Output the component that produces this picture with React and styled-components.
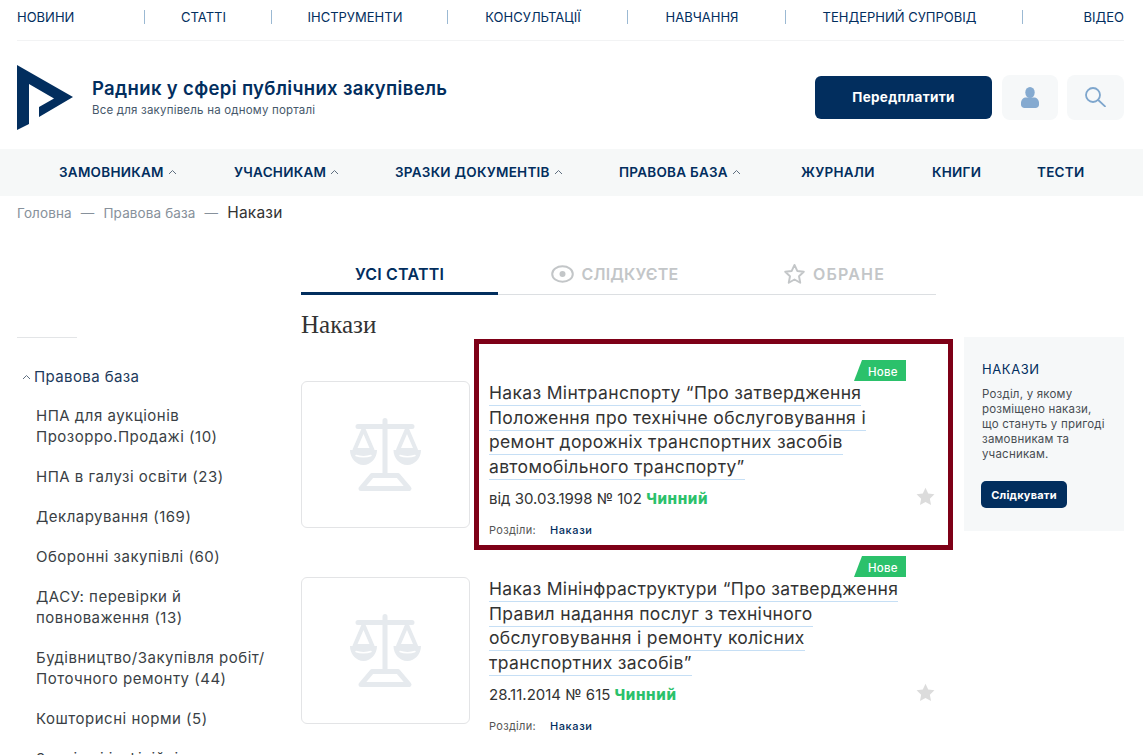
import React from "react";
import styled, {createGlobalStyle} from "styled-components";

const NAVY = "#022e5e";
const FONT = `"Inter", "Noto Sans", "Liberation Sans", sans-serif`;

const GlobalStyle = createGlobalStyle`
  html, body {
    margin: 0;
    height: 755px;
    overflow: hidden;
    background: #fff;
    font-family: ${FONT};
    color: #333;
  }
  * { box-sizing: border-box; }
`;

const Page = styled.div`
  width: 1143px;
`;

const TopNav = styled.nav`
  display: grid;
  grid-template-columns: 128px 127px 176px 180px 158px 237px 1fr;
  align-items: center;
  height: 41px;
  margin: 0 19px 0 17px;
  padding-bottom: 6px;
  border-bottom: 1px solid #f2f3f4;
`;

const TopItem = styled.a`
  display: flex;
  justify-content: ${(p) => p.$align || "center"};
  padding-right: ${(p) => (p.$align ? 0 : 9)}px;
  height: 14px;
  align-items: center;
  font-size: 13px;
  color: ${NAVY};
  white-space: nowrap;
  border-right: ${(p) => (p.$last ? "none" : "1px solid #9bb9d3")};
`;

const Header = styled.header`
  display: flex;
  align-items: center;
  height: 108px;
  padding-top: 4px;
  margin: 0 19px 0 17px;
`;

const Brand = styled.div`
  flex: 1;
  display: flex;
  align-items: center;
  gap: 19px;
`;

const BrandTitle = styled.div`
  font-size: 18.5px;
  font-weight: 600;
  letter-spacing: 0.35px;
  color: ${NAVY};
  line-height: 22px;
`;

const BrandSub = styled.div`
  font-size: 11.5px;
  letter-spacing: 0.2px;
  color: #46586b;
  margin-top: 4px;
`;

const Subscribe = styled.button`
  width: 177px;
  height: 43px;
  border: none;
  border-radius: 6px;
  background: ${NAVY};
  color: #fff;
  font-family: ${FONT};
  font-size: 13.5px;
  font-weight: 700;
  letter-spacing: 0.3px;
  margin-right: 10px;
`;

const IconButton = styled.button`
  width: ${(p) => p.$w}px;
  height: 45px;
  border: none;
  border-radius: 8px;
  background: #f6f8f9;
  margin-right: ${(p) => p.$mr || 0}px;
  display: flex;
  align-items: center;
  justify-content: center;
  padding: 0;
`;

const MainNav = styled.nav`
  display: flex;
  align-items: center;
  height: 47px;
  padding: 0 0 1px 59px;
  background: #f6f8f8;
`;

const MainItem = styled.a`
  display: flex;
  align-items: center;
  gap: 4px;
  width: ${(p) => p.$w}px;
  font-size: 13.5px;
  font-weight: 600;
  letter-spacing: 0.25px;
  color: ${NAVY};
  white-space: nowrap;
`;

const Crumbs = styled.div`
  display: flex;
  align-items: center;
  gap: 9px;
  height: 33px;
  padding-left: 17px;
  font-size: 13.5px;
  letter-spacing: 0.13px;
  color: #87919b;
`;

const CrumbNow = styled.span`
  font-size: 15.5px;
  letter-spacing: 0.2px;
  color: #333;
`;

const Main = styled.main`
  display: grid;
  grid-template-columns: 284px 635px 160px;
  margin-left: 17px;
  padding-top: 21px;
`;

const Sidebar = styled.aside`
  padding-top: 87px;
`;

const SideRule = styled.div`
  width: 60px;
  height: 1px;
  background: #e3e5e7;
  margin-bottom: 28px;
`;

const SideHead = styled.div`
  display: flex;
  align-items: center;
  gap: 3px;
  padding-left: 5px;
  font-size: 15px;
  letter-spacing: 0.4px;
  line-height: 21px;
  color: #1d3a5c;
  margin-bottom: 18px;
`;

const SideList = styled.ul`
  list-style: none;
  margin: 0;
  padding: 0 0 0 19px;
  display: flex;
  flex-direction: column;
  gap: 19px;
`;

const SideItem = styled.li`
  font-size: 15px;
  letter-spacing: 0.5px;
  line-height: 21px;
  color: #3a3f45;
  white-space: nowrap;
`;

const Center = styled.section`
  min-width: 0;
`;

const Tabs = styled.div`
  display: grid;
  grid-template-columns: 197px 234px 1fr;
  height: 45px;
  border-bottom: 1px solid #dcdfe2;
`;

const Tab = styled.div`
  display: flex;
  align-items: center;
  justify-content: center;
  gap: 7px;
  height: 45px;
  padding: 6px 0 ${(p) => (p.$active ? 0 : 4)}px;
  font-size: 16px;
  letter-spacing: ${(p) => p.$spacing || 0.2}px;
  font-weight: 600;
  color: ${(p) => (p.$active ? NAVY : "#c3c6c8")};
  border-bottom: ${(p) => (p.$active ? `3px solid ${NAVY}` : "none")};
`;

const Heading = styled.h1`
  margin: 15px 0 0;
  height: 30px;
  font-family: "Liberation Serif", serif;
  font-size: 25px;
  line-height: 30px;
  font-weight: 400;
  color: #333;
`;

const Row = styled.article`
  position: relative;
  display: flex;
  gap: 19px;
  height: 196px;
  &:first-of-type {
    margin-top: 20px;
  }
`;

const Thumb = styled.div`
  flex: none;
  width: 169px;
  height: 147px;
  margin-top: 21px;
  border: 1px solid #e3e4e6;
  border-radius: 6px;
  display: flex;
  align-items: center;
  justify-content: center;
`;

const Body = styled.div`
  position: relative;
  flex: 1;
  min-width: 0;
`;

const BadgeLine = styled.div`
  display: flex;
  justify-content: flex-end;
  padding-right: 30px;
`;

const Badge = styled.span`
  width: 52px;
  height: 21px;
  padding: 3px 0 0 14px;
  background: #2bc16b;
  clip-path: polygon(8px 0, 100% 0, 100% 100%, 0 100%);
  color: #fff;
  font-size: 11.5px;
  font-weight: 500;
  letter-spacing: 0.2px;
  line-height: 18px;
`;

const Title = styled.h2`
  margin: 0;
  font-size: 17.5px;
  line-height: 24.5px;
  font-weight: 400;
  letter-spacing: 0.33px;
  color: #333;
  height: 98px;
  max-width: 430px;
`;

const TitleText = styled.span`
  border-bottom: 1px solid #c6dff5;
  padding-bottom: 2px;
`;

const Meta = styled.div`
  margin-top: 10px;
  font-size: 15px;
  line-height: 20px;
  color: #333;
`;

const Status = styled.b`
  color: #2bc16b;
  font-weight: 800;
  letter-spacing: 0.6px;
`;

const Sections = styled.div`
  display: flex;
  gap: 14px;
  margin-top: 14px;
  font-size: 11px;
  letter-spacing: 0.3px;
  line-height: 14px;
  color: #555;
`;

const SectionLink = styled.a`
  color: ${NAVY};
  font-weight: 500;
  letter-spacing: 0.6px;
`;

const Fav = styled.div`
  position: absolute;
  right: 1px;
  top: 127px;
  line-height: 0;
`;

const RedFrame = styled.div`
  position: absolute;
  left: 173px;
  top: -21px;
  width: 479px;
  height: 211px;
  border: 5px solid #7e0017;
  pointer-events: none;
`;

const Panel = styled.aside`
  margin: 87px 0 0 28px;
  width: 160px;
  height: 194px;
  padding: 24px 18px 0;
  background: #f6f8f9;
`;

const PanelTitle = styled.div`
  font-size: 13px;
  font-weight: 400;
  letter-spacing: 0.6px;
  color: ${NAVY};
  line-height: 16px;
`;

const PanelText = styled.p`
  margin: 10px 0 0;
  font-size: 11.5px;
  letter-spacing: 0.2px;
  line-height: 15px;
  color: #484d52;
`;

const Follow = styled.button`
  display: block;
  margin: 19px 0 0 -1px;
  width: 86px;
  height: 27px;
  border: none;
  border-radius: 5px;
  background: ${NAVY};
  color: #fff;
  font-family: ${FONT};
  font-size: 11px;
  font-weight: 700;
  letter-spacing: 0.2px;
  padding: 0;
`;

const Chevron = () => (
  <svg width="9" height="6" viewBox="0 0 9 6" fill="none" stroke="#5f6f80" strokeWidth="1">
    <path d="M1 5l3.5-3.5L8 5" />
  </svg>
);

const Logo = () => (
  <svg width="56" height="65" viewBox="0 0 56 65" fill={NAVY}>
    <path d="M0 0L56 32 22 52V42L37 33.5 12 19V59L0 65Z" />
  </svg>
);

const UserIcon = () => (
  <svg width="18" height="21" viewBox="0 0 18 21" fill="#85aad0">
    <ellipse cx="9" cy="5.500" rx="4.700" ry="5.500" />
    <path d="M0 16c0-3.500 2.500-5.500 5-5.500h8c2.500 0 5 2 5 5.500v1.500c0 2-1.500 3.500-3.500 3.500h-11C1.500 21 0 19.500 0 17.500z" />
  </svg>
);

const SearchIcon = () => (
  <svg width="21" height="20" viewBox="0 0 21 20" fill="none" stroke="#7ea6cd" strokeWidth="1.800">
    <circle cx="8" cy="8" r="7" />
    <path d="M13.200 13l6.800 6.300" strokeLinecap="round" />
  </svg>
);

const EyeIcon = () => (
  <svg width="23" height="18" viewBox="0 0 23 18" fill="none" stroke="#c3c6c8" strokeWidth="2">
    <ellipse cx="11.500" cy="9" rx="10.300" ry="7.800" />
    <circle cx="11.500" cy="9" r="3" fill="#c3c6c8" stroke="none" />
  </svg>
);

const StarOutline = () => (
  <svg width="23" height="24" viewBox="0 0 24 24" fill="none" stroke="#c3c6c8" strokeWidth="2" strokeLinejoin="round">
    <path d="M12 2.500l2.900 6.300 6.800.8-5 4.700 1.300 6.800-6-3.400-6 3.400 1.300-6.800-5-4.700 6.800-.8z" />
  </svg>
);

const StarSolid = () => (
  <svg width="19" height="19" viewBox="0 0 24 24" fill="#dcdcdc">
    <path d="M12 1l3.400 7.300 7.900 1-5.800 5.500 1.500 7.900-7-3.900-7 3.900 1.500-7.900L.7 9.300l7.900-1z" />
  </svg>
);

const SCALE_COLOR = "#e6eaee";

const Scales = () => (
  <svg width="71" height="73" viewBox="0 0 71 73" fill="none" stroke={SCALE_COLOR} strokeWidth="5" strokeLinecap="round" strokeLinejoin="round">
    <path d="M35 2.500V56M8 8.500h54" />
    <path strokeWidth="4" d="M13.500 11L4.500 32h18zM57 11l-9 21h18z" />
    <path fill={SCALE_COLOR} stroke="none" d="M0 32h27c0 8-6 15-13.500 15S0 40 0 32zM43.500 32h27.500c0 8-6 15-13.750 15S43.500 40 43.500 32z" />
    <path stroke="#fff" strokeWidth="1.500" d="M6 37.500c4 1.500 11 1.500 15 0M50 37.500c4 1.500 11 1.500 15 0" />
    <path d="M22 57.500h26l11 13H11z" />
  </svg>
);

const topLinks = ["НОВИНИ", "СТАТТІ", "ІНСТРУМЕНТИ", "КОНСУЛЬТАЦІЇ", "НАВЧАННЯ", "ТЕНДЕРНИЙ СУПРОВІД", "ВІДЕО"];

const mainLinks = [
  {label: "ЗАМОВНИКАМ", w: 175, open: true},
  {label: "УЧАСНИКАМ", w: 161, open: true},
  {label: "ЗРАЗКИ ДОКУМЕНТІВ", w: 224, open: true},
  {label: "ПРАВОВА БАЗА", w: 182, open: true},
  {label: "ЖУРНАЛИ", w: 131},
  {label: "КНИГИ", w: 105},
  {label: "ТЕСТИ", w: 60},
];

const sideLinks = [
  ["НПА для аукціонів", "Прозорро.Продажі (10)"],
  ["НПА в галузі освіти (23)"],
  ["Декларування (169)"],
  ["Оборонні закупівлі (60)"],
  ["ДАСУ: перевірки й", "повноваження (13)"],
  ["Будівництво/Закупівля робіт/", "Поточного ремонту (44)"],
  ["Кошторисні норми (5)"],
  ["Зовнішні і офіційні"],
];

const articles = [
  {
    id: 1,
    title: "Наказ Мінтранспорту “Про затвердження Положення про технічне обслуговування і ремонт дорожніх транспортних засобів автомобільного транспорту”",
    meta: "від 30.03.1998 № 102",
    framed: true,
  },
  {
    id: 2,
    title: "Наказ Мінінфраструктури “Про затвердження Правил надання послуг з технічного обслуговування і ремонту колісних транспортних засобів”",
    meta: "28.11.2014 № 615",
  },
];

const App = () => {
  return (
    <Page>
      <GlobalStyle />
      <TopNav>
        {topLinks.map((link, index) => (
          <TopItem
            key={link}
            $align={index === 0 ? "flex-start" : index === topLinks.length - 1 ? "flex-end" : ""}
            $last={index === topLinks.length - 1}
          >
            {link}
          </TopItem>
        ))}
      </TopNav>

      <Header>
        <Brand>
          <Logo />
          <div>
            <BrandTitle>Радник у сфері публічних закупівель</BrandTitle>
            <BrandSub>Все для закупівель на одному порталі</BrandSub>
          </div>
        </Brand>
        <Subscribe>Передплатити</Subscribe>
        <IconButton $w={56} $mr={9}>
          <UserIcon />
        </IconButton>
        <IconButton $w={57}>
          <SearchIcon />
        </IconButton>
      </Header>

      <MainNav>
        {mainLinks.map((link) => (
          <MainItem key={link.label} $w={link.w}>
            {link.label}
            {link.open && <Chevron />}
          </MainItem>
        ))}
      </MainNav>

      <Crumbs>
        <span>Головна</span>
        <span>—</span>
        <span>Правова база</span>
        <span>—</span>
        <CrumbNow>Накази</CrumbNow>
      </Crumbs>

      <Main>
        <Sidebar>
          <SideRule />
          <SideHead>
            <Chevron />
            Правова база
          </SideHead>
          <SideList>
            {sideLinks.map((lines) => (
              <SideItem key={lines[0]}>
                {lines.map((line) => (
                  <div key={line}>{line}</div>
                ))}
              </SideItem>
            ))}
          </SideList>
        </Sidebar>

        <Center>
          <Tabs>
            <Tab $active>УСІ СТАТТІ</Tab>
            <Tab>
              <EyeIcon />
              СЛІДКУЄТЕ
            </Tab>
            <Tab $spacing={1.2}>
              <StarOutline />
              ОБРАНЕ
            </Tab>
          </Tabs>
          <Heading>Накази</Heading>
          {articles.map((article) => (
            <Row key={article.id}>
              <Thumb>
                <Scales />
              </Thumb>
              <Body>
                <BadgeLine>
                  <Badge>Нове</Badge>
                </BadgeLine>
                <Title>
                  <TitleText>{article.title}</TitleText>
                </Title>
                <Meta>
                  {article.meta} <Status>Чинний</Status>
                </Meta>
                <Sections>
                  <span>Розділи:</span>
                  <SectionLink>Накази</SectionLink>
                </Sections>
                <Fav>
                  <StarSolid />
                </Fav>
              </Body>
              {article.framed && <RedFrame />}
            </Row>
          ))}
        </Center>

        <Panel>
          <PanelTitle>НАКАЗИ</PanelTitle>
          <PanelText>
            Розділ, у якому розміщено накази, що стануть у пригоді замовникам та учасникам.
          </PanelText>
          <Follow>Слідкувати</Follow>
        </Panel>
      </Main>
    </Page>
  );
};

export default App;
